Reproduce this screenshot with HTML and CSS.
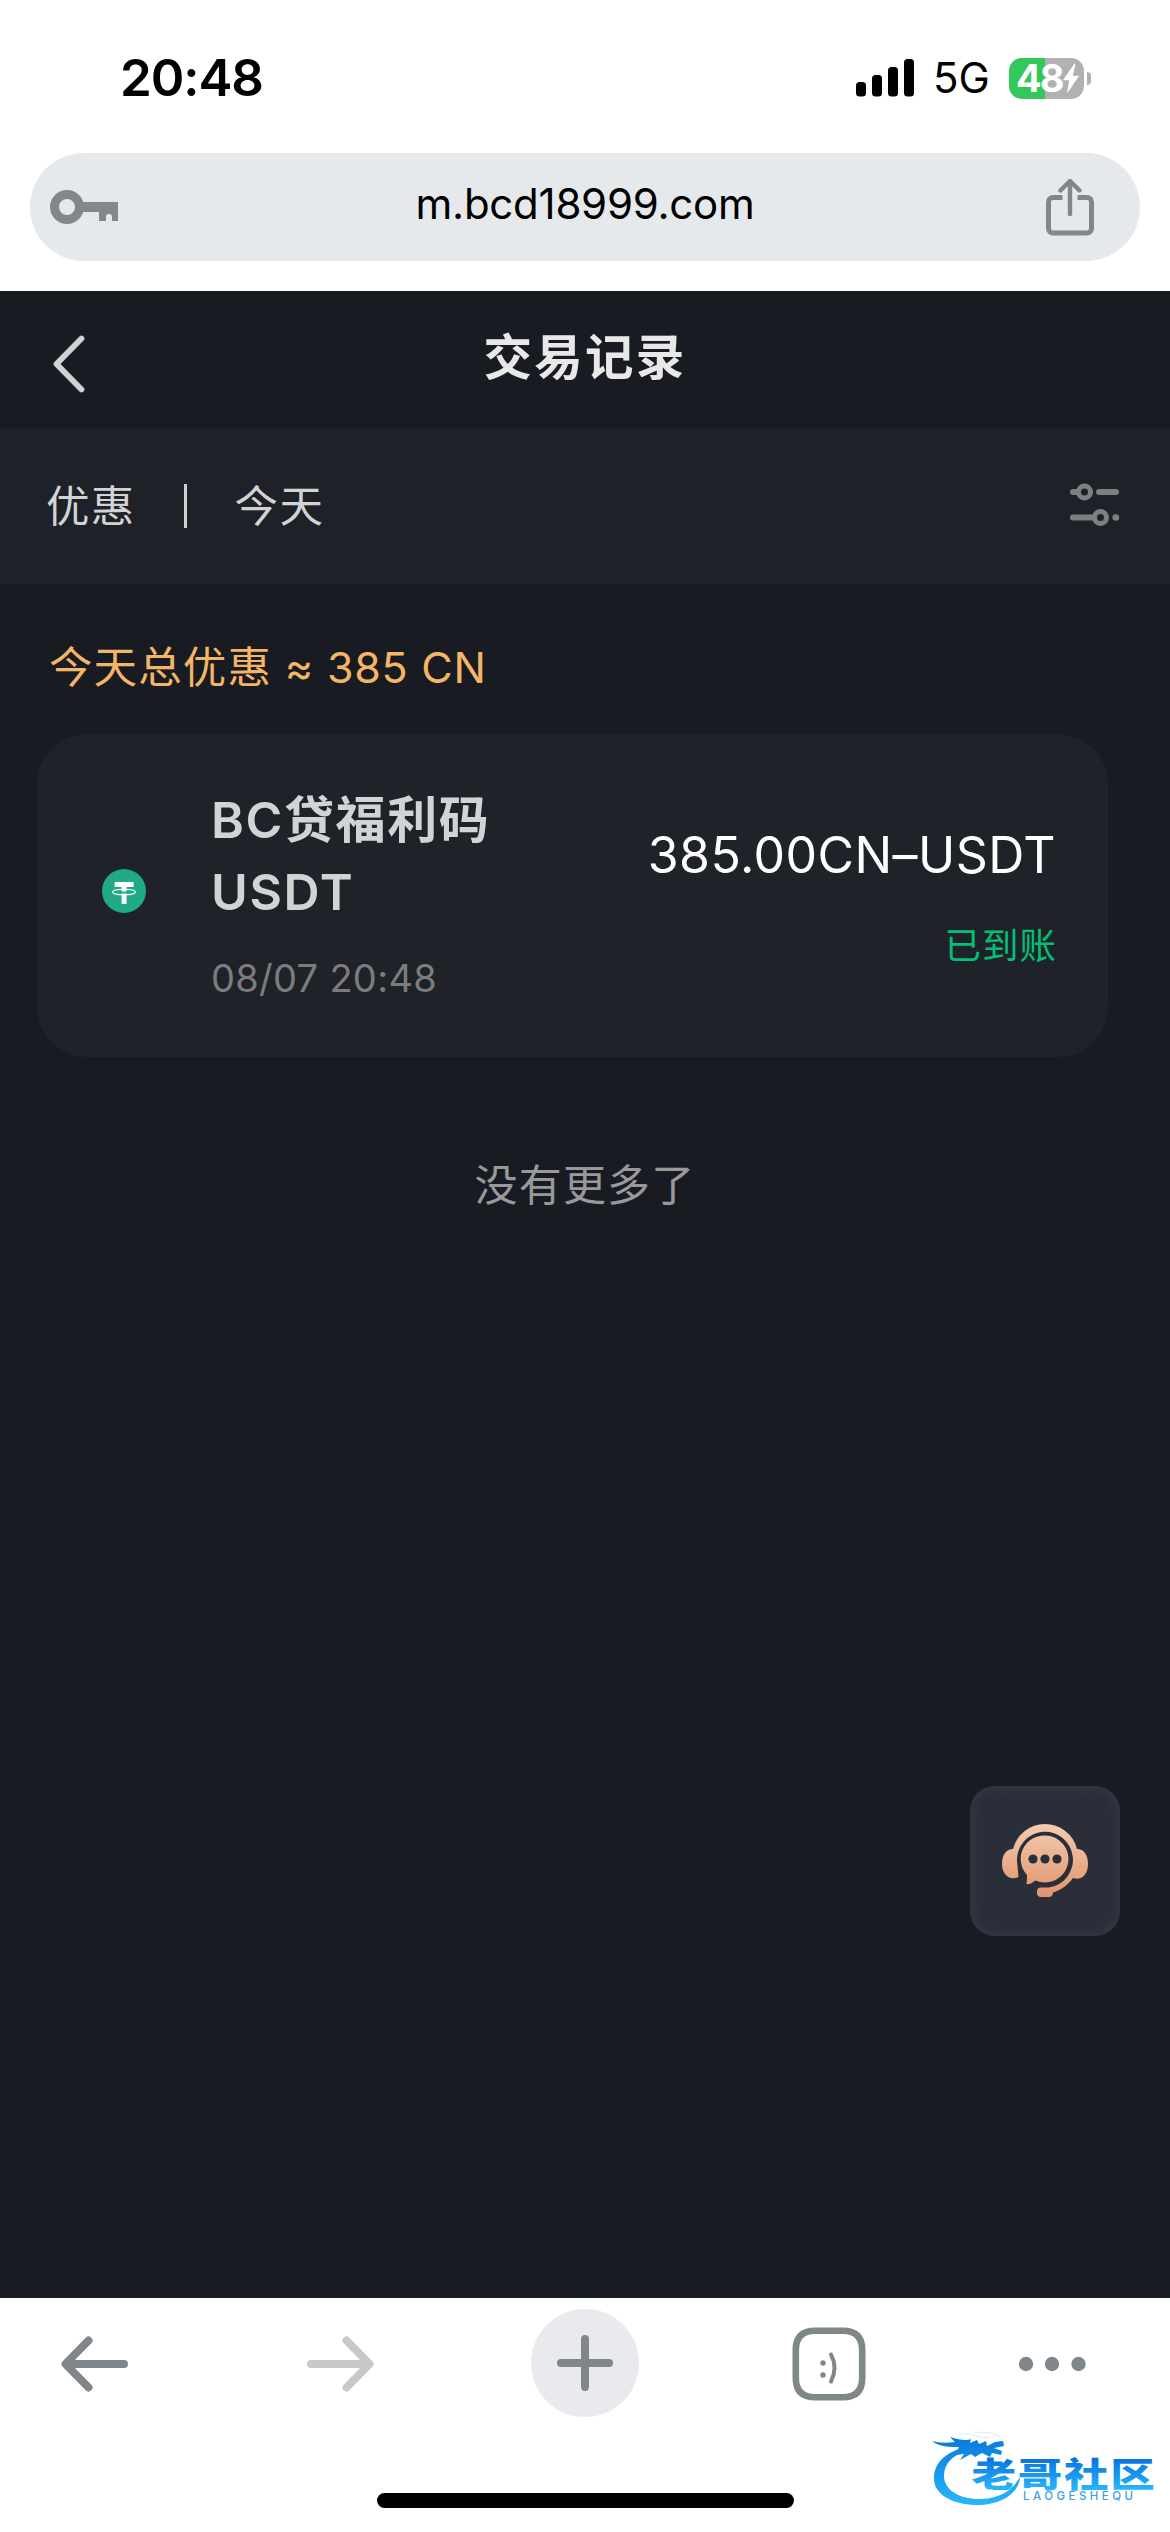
FILE: index.html
```html
<!DOCTYPE html>
<html lang="zh-CN">
<head>
<meta charset="utf-8">
<title>交易记录</title>
<link rel="stylesheet" href="styles.css">
</head>
<body>
<div class="screen">
  <div class="status-bar">
    <span class="clock">20:48</span>
    <div class="indicators">
      <svg class="signal" width="58" height="38" viewBox="0 0 58 38">
        <rect x="0" y="23" width="10" height="14.5" rx="3.5"/>
        <rect x="16" y="16" width="10" height="21.5" rx="3.5"/>
        <rect x="32" y="8" width="10" height="29.5" rx="3.5"/>
        <rect x="48" y="0" width="10" height="37.5" rx="3.5"/>
      </svg>
      <span class="network">5G</span>
      <div class="battery">
        <span class="battery-level">48</span>
        <svg width="18" height="31" viewBox="0 0 18 28" preserveAspectRatio="none"><path d="M12.5 .5 0.8 15.5h6.4L5 27.5 17.2 11.5h-6.5L13.5 1z" fill="#fff"/></svg>
      </div>
      <span class="battery-tip"></span>
    </div>
  </div>

  <div class="address-bar">
    <svg class="key" width="68" height="36" viewBox="0 0 68 36">
      <path fill="#81878a" fill-rule="evenodd" d="M17 1a17 17 0 1 0 0 34a17 17 0 0 0 0-34zM17 10a8 8 0 1 1 0 16a8 8 0 0 1 0-16z"/>
      <path fill="#81878a" d="M32 13h36v19h-6v-4a3 3 0 0 0-6 0v4h-7v-9H32z"/>
    </svg>
    <span class="url">m.bcd18999.com</span>
    <svg class="share" width="48" height="58" viewBox="0 0 48 58" fill="none" stroke="#81878c" stroke-width="5">
      <path d="M16.500 19.500H7a4.500 4.500 0 0 0-4.500 4.500v26.500a4.500 4.500 0 0 0 4.500 4.500h34a4.500 4.500 0 0 0 4.500-4.500V24a4.500 4.500 0 0 0-4.500-4.500h-9.500"/>
      <path d="M24 36V3M14.500 12.500 24 3l9.500 9.500" stroke-width="4.400" stroke-linecap="round" stroke-linejoin="round"/>
    </svg>
  </div>

  <main class="page">
    <header class="page-header">
      <svg class="back" width="34" height="60" viewBox="0 0 34 60" fill="none" stroke="#d2d2d4" stroke-width="5.800" stroke-linecap="round" stroke-linejoin="round"><path d="M29.500 4.500 4.500 30l25 25.500"/></svg>
      <h1 class="page-title">交易记录</h1>
    </header>
    <div class="filters">
      <span>优惠</span>
      <i class="divider"></i>
      <span>今天</span>
      <svg class="tune" width="52" height="46" viewBox="0 0 52 46" fill="none" stroke="#7e7f83" stroke-width="6" stroke-linecap="round">
        <path d="M4 10h5M30 10h17M4 35.500h19"/>
        <circle cx="15.500" cy="10" r="6" stroke-width="5"/>
        <circle cx="31.500" cy="35.500" r="6" stroke-width="5"/>
        <path d="M46.600 35.500h.4" stroke-width="6.400"/>
      </svg>
    </div>
    <p class="summary">今天总优惠<span class="summary-total"> ≈ 385 CN</span></p>
    <section class="record">
      <svg class="coin" width="44" height="44" viewBox="0 0 44 44">
        <circle cx="22" cy="22" r="22" fill="#1fa985"/>
        <path d="M12.600 13h19v5h-7v4.600h-5V18h-7zM19.600 24.500h5V35h-5z" fill="#fff"/>
        <ellipse cx="22" cy="23" rx="11.500" ry="2.800" fill="none" stroke="#fff" stroke-width="1.100"/>
      </svg>
      <div class="record-info">
        <h2 class="record-title">BC贷福利码<br>USDT</h2>
        <time class="record-time">08/07 20:48</time>
      </div>
      <div class="record-result">
        <span class="amount">385.00CN–USDT</span>
        <span class="state">已到账</span>
      </div>
    </section>
    <p class="list-end">没有更多了</p>

    <button class="support" aria-label="客服">
      <svg width="88" height="74" viewBox="0 0 88 74">
        <defs>
          <linearGradient id="copper" gradientUnits="userSpaceOnUse" x1="0" y1="0" x2="0" y2="74">
            <stop offset="0" stop-color="#f3ccb0"/><stop offset="1" stop-color="#df936c"/>
          </linearGradient>
        </defs>
        <path fill="url(#copper)" d="M12 25A33 33 0 0 1 76 25C83 25 87 31 87 40C87 51 80 57 72 54C67 61 60 66 52 68.500Q51.500 73 48 73H40Q36 73 36 69V67.500Q36 63.500 40 63.500H48A28 28 0 1 0 16 37L17.500 53C9 57 1 51 1 40C1 30 6 25 12 25z"/>
        <path fill="url(#copper)" d="M44 11.500A23.500 23.500 0 1 1 34.500 56.500Q29 61 25.500 60Q26 56 26 51A23.500 23.500 0 0 1 44 11.500z"/>
        <g fill="#2a2f3b"><circle cx="32" cy="35" r="4.600"/><circle cx="44" cy="35" r="4.600"/><circle cx="56" cy="35" r="4.600"/></g>
      </svg>
    </button>
  </main>

  <nav class="toolbar">
    <svg width="68" height="56" viewBox="0 0 68 56" fill="none" stroke="#7f878a" stroke-width="8" stroke-linecap="round" stroke-linejoin="round"><path d="M63 28H8M27.500 4.500 4.500 28l23 23.500"/></svg>
    <svg class="forward" width="68" height="56" viewBox="0 0 68 56" fill="none" stroke="#c8c8c8" stroke-width="8" stroke-linecap="round" stroke-linejoin="round"><path d="M5 28H60M40.500 4.500 63.500 28l-23 23.500"/></svg>
    <svg class="new-tab" width="108" height="108" viewBox="0 0 108 108"><circle cx="54" cy="54" r="54" fill="#e8eaee"/><path d="M30 54h48M54 30v48" stroke="#80878c" stroke-width="8" stroke-linecap="round"/></svg>
    <svg class="tabs" width="74" height="74" viewBox="0 0 74 74" fill="none" stroke="#7f8789">
      <path stroke-width="6.600" d="M23 3.800H51Q70.200 3.800 70.200 23V51Q70.200 70.200 51 70.200H23Q3.800 70.200 3.800 51V23Q3.800 3.800 23 3.800z"/>
      <path stroke-width="4" stroke-linecap="round" d="M39 27.500Q46 40.500 39 54.500"/>
      <g fill="#7f8789" stroke="none"><circle cx="31" cy="36" r="2.700"/><circle cx="31" cy="48" r="2.700"/></g>
    </svg>
    <svg class="more" width="68" height="16" viewBox="0 0 68 16" fill="#7f878a"><circle cx="8" cy="8" r="7.200"/><circle cx="34" cy="8" r="7.200"/><circle cx="60.500" cy="8" r="7.200"/></svg>
  </nav>
  <footer class="home-area"><div class="home-indicator"></div></footer>

  <svg class="watermark" width="230" height="84" viewBox="0 0 230 84">
    <defs>
      <linearGradient id="sky" gradientUnits="userSpaceOnUse" x1="0" y1="10" x2="0" y2="78"><stop offset="0" stop-color="#087bdd"/><stop offset="1" stop-color="#2bb7ff"/></linearGradient>
      <linearGradient id="label" gradientUnits="userSpaceOnUse" x1="0" y1="-29" x2="0" y2="2"><stop offset="0" stop-color="#0575dd"/><stop offset="1" stop-color="#28b4fc"/></linearGradient>
    </defs>
    <path fill="url(#sky)" d="M34 18C12 23 1 36 2 51C3 67 24 77 49 76C70 75 87 64 88 48C80 62 68 69 50 70C28 71 12 61 12 47C12 35 20 26 34 23z"/>
    <path fill="url(#sky)" d="M0 12C7 14 15 14 23 13L18 8C27 11 35 12 39 10L38 14L45 11L47 15L54 12L55 17L63 13L71 12L72 17L62 19L70 22L69 26L60 24L58 28L50 24L43 28L39 25L28 31L32 25L23 26L27 18C18 18 7 18 0 12z"/>
    <path fill="none" stroke="#dceaf5" stroke-width="1" d="M27 5C40 3 47 11 58 8M43 3C54 4 62 2 71 10"/>
    <text class="mark-name" x="0" y="0" transform="translate(39.500 58) scale(1.310 1)" textLength="140" lengthAdjust="spacing" fill="url(#label)">老哥社区</text>
    <text class="mark-latin" x="91" y="71" textLength="110" fill="#3d9fe5">LAOGESHEQU</text>
  </svg>
</div>
</body>
</html>
```
FILE: styles.css
```css
* { box-sizing: border-box; margin: 0; padding: 0; }
body {
  width: 1170px;
  background: #fff;
  font-family: Inter, "Noto Sans CJK SC", sans-serif;
  font-weight: 400;
}
svg { display: block; flex: none; }
.screen { position: relative; display: flex; flex-direction: column; width: 1170px; height: 2532px; overflow: hidden; }

.status-bar { display: flex; align-items: center; justify-content: space-between; height: 153px; padding: 3px 79px 0 120px; color: #000; }
.clock { font-size: 51px; font-weight: 600; line-height: 60px; letter-spacing: -1.100px; }
.indicators { display: flex; align-items: center; }
.network { margin-left: 19px; width: 76px; font-size: 42px; line-height: 50px; }
.battery { display: flex; align-items: center; width: 75px; height: 41px; padding-left: 7px; border-radius: 13px; background: linear-gradient(90deg, #34c759 36px, #b1b1b1 36px); }
.battery-level { width: 46px; color: #fff; font-size: 38px; font-weight: 700; line-height: 41px; letter-spacing: -2px; }
.battery-tip { width: 4px; height: 13px; margin-left: 3px; border-radius: 0 5px 5px 0; background: #b1b1b1; }

.address-bar { display: flex; align-items: center; height: 108px; margin: 0 30px 30px; padding: 0 46px 0 20px; border-radius: 54px; background: #e5e9ec; }
.url { flex: 1; padding: 0 0 6px 6px; text-align: center; font-size: 42px; line-height: 50px; letter-spacing: -.25px; color: #000; }

.page { position: relative; height: 2007px; background: #181b22; color: #d2d3d5; }
.page-header { display: grid; grid-template-columns: 120px 1fr 120px; align-items: center; height: 137px; }
.back { margin: 8px 0 0 52px; }
.page-title { padding-bottom: 4px; text-align: center; color: #e8e8e9; font-size: 48.500px; font-weight: 700; line-height: 60px; letter-spacing: 2.200px; }
.filters { display: flex; align-items: center; height: 156px; padding: 0 49px 0 46px; background: #1e2128; font-size: 43.500px; line-height: 60px; letter-spacing: 1.300px; }
.divider { width: 3px; height: 44px; margin: 0 48px; background: #cfd0d2; }
.tune { margin: 0 0 2px auto; }
.summary { height: 150px; padding: 53px 0 0 49px; font-size: 43.500px; line-height: 60px; letter-spacing: 1.100px; color: #f4b566; white-space: pre; }
.summary-total { font-size: 43px; letter-spacing: .75px; }
.record { display: flex; width: 1071px; height: 323px; margin-left: 37px; padding: 0 52px 0 65px; border-radius: 50px; background: #1f2229; }
.coin { margin-top: 135px; }
.record-info { margin: 50px 0 0 65px; }
.record-title { font-size: 50px; font-weight: 600; line-height: 72px; letter-spacing: 1.600px; }
.record-time { display: block; margin-top: 28px; font-size: 38px; line-height: 44px; letter-spacing: .3px; color: #7c7c7e; }
.record-result { display: flex; flex-direction: column; align-items: flex-end; margin: 91px 0 0 auto; }
.amount { color: #fff; font-size: 50px; line-height: 60px; letter-spacing: .45px; }
.state { margin: 36px -1px 0 0; color: #00c076; font-size: 36.500px; line-height: 50px; letter-spacing: 1px; }
.list-end { margin-top: 98px; text-align: center; color: #98999b; font-size: 43px; line-height: 60px; letter-spacing: 1.200px; }
.support { position: absolute; left: 970px; top: 1495px; display: flex; align-items: center; justify-content: center; width: 150px; height: 150px; border: 0; border-radius: 25px; background: #292e39; box-shadow: inset 0 0 16px #363c48; }

.toolbar { display: flex; align-items: center; height: 130px; padding: 1px 0 0 61px; }
.forward { margin-left: 177px; }
.new-tab { margin: 0 0 1px 157px; }
.tabs { margin-left: 153px; }
.more { margin-left: 152px; }
.home-area { display: flex; justify-content: center; padding-top: 65px; }
.home-indicator { width: 417px; height: 15px; border-radius: 8px; background: #000; }
.watermark { position: absolute; left: 932px; top: 2429px; }
.mark-name { font-family: Inter, "Noto Sans CJK SC", sans-serif; font-weight: 900; font-size: 34px; }
.mark-latin { font-family: Inter, sans-serif; font-size: 11.500px; font-weight: 500; }
```
